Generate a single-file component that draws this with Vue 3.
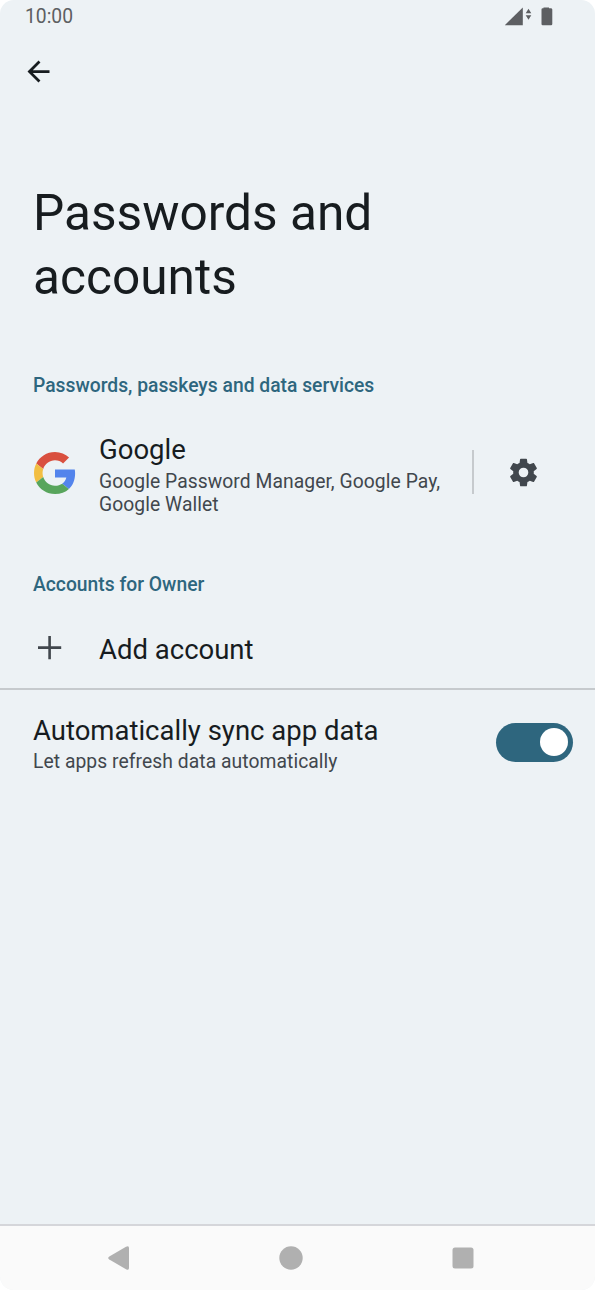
<script setup>
import { ref } from 'vue'

const syncEnabled = ref(true)
</script>

<template>
  <div class="screen">
    <header class="status">
      <span class="clock">10:00</span>
      <svg class="status-icons" width="50" height="20" viewBox="0 0 50 20" fill="#5d5f62">
        <path d="M0 19.300V18.900L17.800 1.500V19.300Z" />
        <path d="M20.700 7.300L23.500 2.700L26.300 7.300ZM20.700 9.200L23.500 13.800L26.300 9.200Z" />
        <path d="M38.500 2.300V1.600H44V2.300H45.600Q47.300 2.300 47.300 3.500V18Q47.300 19.300 46.100 19.300H37.700Q36.500 19.300 36.500 18V3.500Q36.500 2.300 37.700 2.300Z" />
      </svg>
    </header>

    <nav class="toolbar">
      <svg width="33" height="33" viewBox="0 0 24 24" fill="#171c1f">
        <path d="M20 11H7.830l5.590-5.590L12 4l-8 8 8 8 1.410-1.410L7.830 13H20v-2z" />
      </svg>
    </nav>

    <h1 class="title">Passwords and<br />accounts</h1>

    <h2 class="section services">Passwords, passkeys and data services</h2>
    <div class="row provider">
      <svg class="google" width="42" height="42" viewBox="0 0 48 48">
        <path fill="#d9503f" d="M24 9.500c3.540 0 6.710 1.220 9.210 3.600l6.850-6.850C35.900 2.380 30.470 0 24 0 14.620 0 6.510 5.380 2.560 13.220l7.980 6.190C12.430 13.720 17.740 9.500 24 9.500z" />
        <path fill="#5384ec" d="M46.980 24.550c0-1.570-.15-3.090-.38-4.550H24v9.020h12.940c-.58 2.960-2.260 5.480-4.780 7.180l7.730 6c4.510-4.180 7.090-10.360 7.090-17.650z" />
        <path fill="#f2be42" d="M10.530 28.590c-.48-1.450-.76-2.990-.76-4.590s.27-3.140.76-4.590l-7.980-6.190C.92 16.460 0 20.120 0 24c0 3.880.92 7.540 2.560 10.780l7.970-6.190z" />
        <path fill="#58a55c" d="M24 48c6.480 0 11.930-2.130 15.890-5.810l-7.730-6c-2.150 1.450-4.920 2.300-8.160 2.300-6.260 0-11.570-4.220-13.470-9.910l-7.980 6.190C6.510 42.620 14.620 48 24 48z" />
      </svg>
      <div class="copy">
        <div class="name">Google</div>
        <div class="summary">Google Password Manager, Google Pay,<br />Google Wallet</div>
      </div>
      <div class="separator"></div>
      <svg class="gear" width="33" height="33" viewBox="0 0 24 24" fill="#41474d">
        <path d="M19.500 12c0-.34-.03-.66-.07-1l2.110-1.630c.19-.15.240-.42.120-.64l-2-3.460c-.12-.22-.37-.31-.61-.22l-2.490 1c-.52-.4-1.080-.73-1.690-.98l-.37-2.650C14.460 2.180 14.250 2 14 2h-4c-.25 0-.46.180-.49.420l-.38 2.650c-.61.250-1.170.59-1.690.98l-2.490-1c-.23-.09-.49 0-.61.220l-2 3.460c-.13.220-.07.490.12.640L4.570 11c-.04.340-.07.670-.07 1s.03.650.07.970l-2.110 1.660c-.19.150-.25.420-.12.640l2 3.460c.12.220.38.300.61.220l2.490-1.010c.52.400 1.080.73 1.690.98l.38 2.650c.03.240.24.430.49.430h4c.25 0 .46-.19.490-.43l.37-2.650c.61-.25 1.170-.58 1.690-.98l2.490 1.010c.23.080.49 0 .61-.22l2-3.460c.12-.22.07-.49-.12-.64l-2.110-1.660c.04-.32.07-.63.070-.97zM12 15.500a3.500 3.500 0 1 1 0-7 3.500 3.500 0 0 1 0 7z" />
      </svg>
    </div>

    <h2 class="section accounts">Accounts for Owner</h2>
    <div class="row add">
      <svg class="plus" width="33" height="33" viewBox="0 0 33 33" fill="#41474d">
        <path d="M15.300 5h2.600v10.300h10.300v2.600H17.900v10.300h-2.600V17.900H5v-2.600h10.300Z" />
      </svg>
      <div class="name">Add account</div>
    </div>

    <div class="row sync">
      <div class="copy">
        <div class="name">Automatically sync app data</div>
        <div class="summary">Let apps refresh data automatically</div>
      </div>
      <button
        class="switch"
        :class="{ on: syncEnabled }"
        role="switch"
        :aria-checked="syncEnabled"
        @click="syncEnabled = !syncEnabled"
      >
        <span class="thumb"></span>
      </button>
    </div>

    <footer class="navbar">
      <svg width="24" height="24" viewBox="0 0 24 24" fill="#b0b0b0">
        <path d="M2.300 10.500L19 .800Q22 -.6 22 1.900V22.100Q22 24.600 19 23.200L2.300 13.500Q.1 12 2.300 10.500Z" />
      </svg>
      <svg width="24" height="24" viewBox="0 0 24 24" fill="#b0b0b0"><circle cx="12" cy="12" r="11.700" /></svg>
      <svg width="24" height="24" viewBox="0 0 24 24" fill="#b0b0b0"><rect x="1.500" y="1.500" width="21" height="21" rx="2.500" /></svg>
    </footer>
  </div>
</template>

<style>
html,
body {
  background: #fff;
  overflow: hidden;
}
</style>

<style scoped>
.screen {
  box-sizing: border-box;
  width: 595px;
  height: 1290px;
  display: flex;
  flex-direction: column;
  overflow: hidden;
  border-radius: 14px;
  background: #edf2f5;
  color: #171c1f;
  font-family: Roboto, "Liberation Sans", sans-serif;
}

.status {
  display: flex;
  justify-content: space-between;
  height: 33px;
  padding: 6px 40px 0 25px;
  box-sizing: border-box;
}

.clock {
  font-size: 19.3px;
  line-height: 22px;
  color: #5d5f62;
}

.status-icons {
  flex: none;
}

.toolbar {
  height: 77px;
  padding: 22px 0 0 22px;
  box-sizing: border-box;
}

.toolbar svg {
  display: block;
}

.title {
  margin: 71px 0 0 33px;
  font-size: 49.6px;
  line-height: 64px;
  font-weight: 400;
}

.section {
  margin: 0 0 0 33px;
  font-size: 19.3px;
  line-height: 26px;
  font-weight: 500;
  color: #2e667e;
}

.services {
  margin-top: 64px;
}

.accounts {
  margin-top: 34px;
}

.row {
  display: flex;
  align-items: center;
}

.provider {
  height: 132px;
  margin-top: 7px;
  padding: 0 55px 0 34px;
  box-sizing: border-box;
}

.google,
.gear,
.plus {
  flex: none;
}

.google,
.gear {
  margin-top: 1px;
}

.provider .copy {
  flex: 1;
  margin-left: 23px;
  padding-top: 4px;
}

.name {
  font-size: 27.5px;
  line-height: 36px;
  white-space: nowrap;
}

.summary {
  margin-top: 1px;
  font-size: 19.3px;
  line-height: 23px;
  letter-spacing: 0.06px;
  color: #41474d;
  white-space: nowrap;
}

.provider .summary {
  margin-top: 2px;
}

.separator {
  width: 2px;
  height: 44px;
  margin-right: 33px;
  background: #c6cacd;
}

.add {
  height: 92px;
  padding: 8px 0 0 33px;
  gap: 33px;
  border-bottom: 2px solid #c6cacd;
  box-sizing: border-box;
}

.add .name {
  padding-top: 5px;
}

.sync {
  justify-content: space-between;
  height: 104px;
  padding: 0 22px 0 33px;
}

.sync .copy {
  padding-top: 2px;
}

.switch {
  display: flex;
  align-items: center;
  width: 77px;
  height: 39px;
  padding: 0 5px;
  border: 0;
  border-radius: 20px;
  background: #7c868c;
}

.switch.on {
  justify-content: flex-end;
  background: #2e667e;
}

.thumb {
  width: 28px;
  height: 28px;
  border-radius: 50%;
  background: #fff;
}

.navbar {
  display: flex;
  align-items: center;
  justify-content: center;
  gap: 148px;
  height: 66px;
  margin-top: auto;
  padding-right: 13px;
  border-top: 2px solid #d5d6da;
  box-sizing: border-box;
  background: #fafafa;
}
</style>
